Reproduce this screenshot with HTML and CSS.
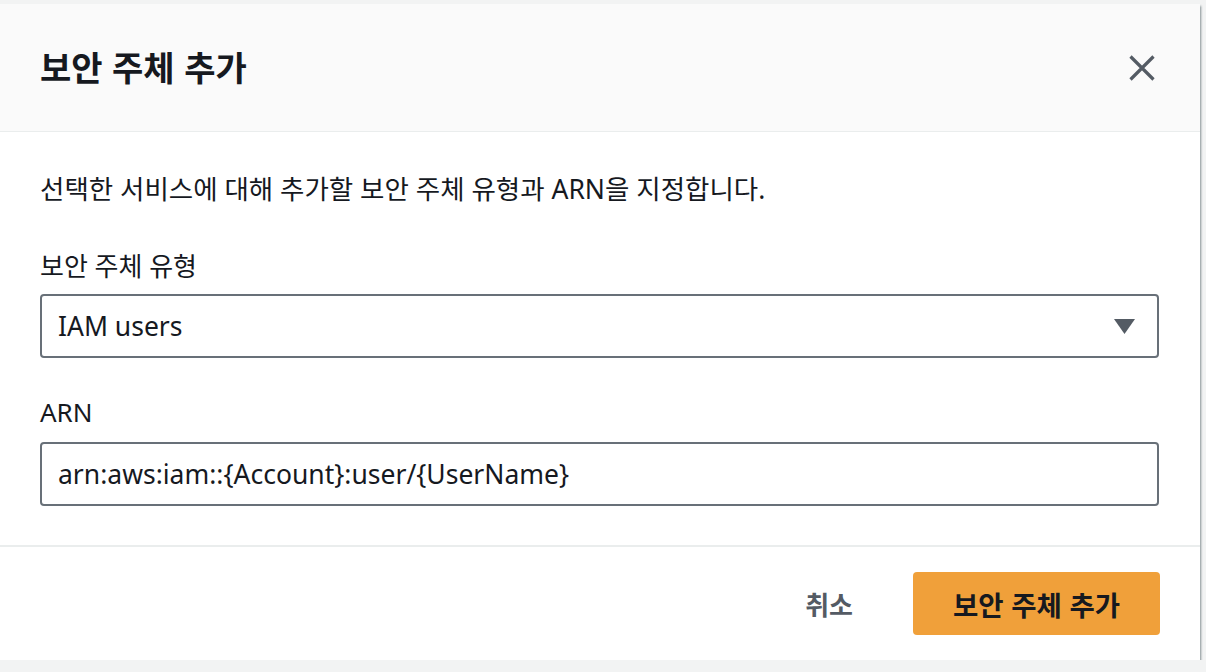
FILE: index.html
```html
<!DOCTYPE html>
<html lang="ko">
<head>
<meta charset="utf-8">
<link rel="stylesheet" href="styles.css">
</head>
<body>
<div class="modal">
  <div class="header">
    <h2 class="title">보안 주체 추가</h2>
    <button class="close" aria-label="닫기">
      <svg width="26" height="26" viewBox="0 0 26 26"><path d="M1.5 1.5 L24.5 24.5 M24.5 1.5 L1.5 24.5" stroke="#545b64" stroke-width="3.2" fill="none"/></svg>
    </button>
  </div>
  <div class="body">
    <p class="desc">선택한 서비스에 대해 추가할 보안 주체 유형과 ARN을 지정합니다.</p>
    <div class="field">
      <label class="label">보안 주체 유형</label>
      <div class="select">
        <span>IAM users</span>
        <svg width="21" height="15" viewBox="0 0 21 15"><path d="M0 0 H21 L10.5 15 Z" fill="#545b64"/></svg>
      </div>
    </div>
    <div class="field">
      <label class="label">ARN</label>
      <div class="input">arn:aws:iam::{Account}:user/{UserName}</div>
    </div>
  </div>
  <div class="footer">
    <button class="btn-link">취소</button>
    <button class="btn-primary">보안 주체 추가</button>
  </div>
</div>
</body>
</html>
```

FILE: styles.css
```css
* { box-sizing: border-box; }
html, body { margin: 0; padding: 0; }
body {
  background: #f2f3f3;
  font-family: "Noto Sans", "Noto Sans CJK KR", sans-serif;
  color: #16191f;
  padding-top: 4px;
}
.modal {
  width: 1200px;
  height: 656px;
  background: #fff;
  box-shadow: 1px 2px 2px rgba(0,28,36,0.45);
  display: flex;
  flex-direction: column;
}
.header {
  height: 128px;
  flex-shrink: 0;
  background: #fafafa;
  border-bottom: 1px solid #eaeded;
  display: flex;
  align-items: center;
  justify-content: space-between;
  padding: 0 45px 0 40px;
}
.title {
  margin: 0;
  font-size: 34px;
  font-weight: 700;
  font-family: "Noto Sans CJK KR", sans-serif;
  line-height: 1;
  padding-bottom: 2px;
}
.close {
  background: none;
  border: none;
  padding: 0;
  width: 26px;
  height: 26px;
  display: flex;
}
.body {
  flex: 1;
  padding: 0 40px;
  border-bottom: 2px solid #eaeded;
}
.desc {
  margin: 39px 0 0 0;
  font-size: 26.5px;
  line-height: 36px;
  font-family: "Noto Sans", "Noto Sans CJK KR", sans-serif;
}
.field { margin-top: 41px; }
.field + .field { margin-top: 36px; }
.label {
  display: block;
  font-size: 26px;
  line-height: 36px;
  font-family: "Noto Sans", "Noto Sans CJK KR", sans-serif;
  margin-bottom: 10px;
}
.field + .field .label { margin-bottom: 12px; }
.select, .input {
  height: 64px;
  border: 2px solid #687078;
  border-radius: 4px;
  display: flex;
  align-items: center;
  padding: 0 22px 0 16px;
  font-size: 26.5px;
  font-family: "Noto Sans", sans-serif;
  width: 1119px;
}
.select { justify-content: space-between; }
.footer {
  height: 113px;
  flex-shrink: 0;
  display: flex;
  align-items: center;
  justify-content: flex-end;
  padding: 0 40px;
  gap: 40px;
}
.btn-link {
  background: none;
  border: none;
  font-family: "Noto Sans CJK KR", sans-serif;
  font-weight: 700;
  font-size: 26px;
  color: #545b64;
  padding: 0 20px;
}
.btn-primary {
  background: #f0a03a;
  border: none;
  border-radius: 4px;
  height: 63px;
  width: 247px;
  font-family: "Noto Sans CJK KR", sans-serif;
  font-weight: 700;
  font-size: 27.5px;
  color: #16191f;
}
```
